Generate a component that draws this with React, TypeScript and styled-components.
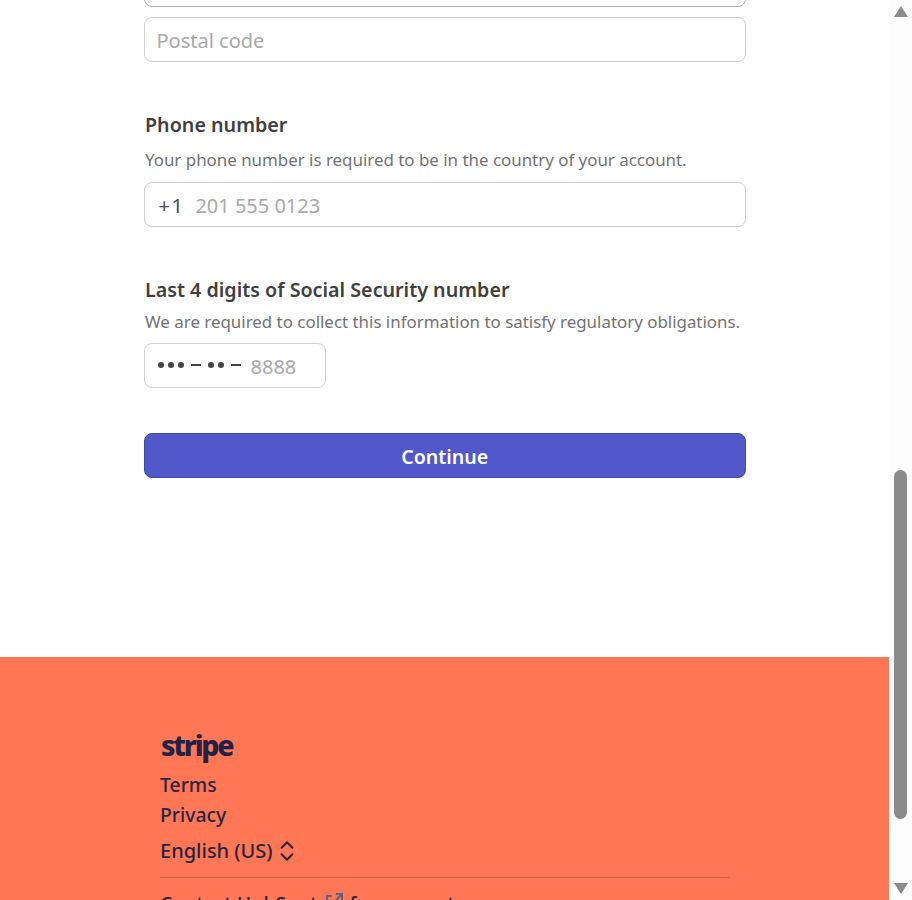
import React from 'react';
import styled, { createGlobalStyle } from 'styled-components';
import { ChevronsUpDown } from 'lucide-react';

const GlobalStyle = createGlobalStyle`
    html, body {
        margin: 0;
        padding: 0;
        height: 900px;
        overflow: hidden;
        background: #fff;
        font-family: "Noto Sans", "Open Sans", Arial, sans-serif;
    }
`;

const App: React.FC = () => {
    return (
        <Screen>
            <GlobalStyle />
            <Page>
                <Form>
                    <ClippedInput />
                    <TextInput>
                        <Placeholder>Postal code</Placeholder>
                    </TextInput>

                    <Section>
                        <Label>Phone number</Label>
                        <Help>Your phone number is required to be in the country of your account.</Help>
                        <TextInput>
                            <Prefix>+1</Prefix>
                            <Placeholder>201 555 0123</Placeholder>
                        </TextInput>
                    </Section>

                    <Section>
                        <Label>Last 4 digits of Social Security number</Label>
                        <Help $tight>We are required to collect this information to satisfy regulatory obligations.</Help>
                        <SsnInput>
                            <Mask>
                                <Dot />
                                <Dot />
                                <Dot />
                                <Dash />
                                <Dot />
                                <Dot />
                                <Dash />
                            </Mask>
                            <Placeholder>8888</Placeholder>
                        </SsnInput>
                    </Section>

                    <Continue type="button">Continue</Continue>
                </Form>

                <Footer>
                    <Logo>stripe</Logo>
                    <FooterLink>Terms</FooterLink>
                    <FooterLink>Privacy</FooterLink>
                    <Language>
                        English (US)
                        <ChevronsUpDown size={26} strokeWidth={1.9} />
                    </Language>
                    <Divider />
                    <Contact>
                        Contact HubSpot
                        <ExternalIcon viewBox="0 0 20 20" aria-hidden="true">
                            <path d="M8 4H3v13h13v-5" />
                            <path d="M10 10l8-8M12 2h6v6" />
                        </ExternalIcon>
                        for support
                    </Contact>
                </Footer>
            </Page>

            <ScrollTrack>
                <ArrowUp />
                <ThumbArea>
                    <Thumb />
                </ThumbArea>
                <ArrowDown />
            </ScrollTrack>
        </Screen>
    );
};

const Screen = styled.div`
    display: flex;
    width: 912px;
    height: 900px;
    overflow: hidden;
`;

const Page = styled.div`
    flex: 0 0 889px;
    display: flex;
    flex-direction: column;
    background: #fff;
`;

const Form = styled.div`
    flex: none;
    display: flex;
    flex-direction: column;
    width: 603px;
    height: 657px;
    margin-left: 143.5px;
`;

const TextInput = styled.div`
    flex: none;
    display: flex;
    align-items: center;
    box-sizing: border-box;
    width: 602.5px;
    height: 45px;
    padding: 2px 12px 0;
    background: #fff;
    border: 1.5px solid #d0d0d0;
    border-radius: 8px;
    font-size: 20px;
`;

const ClippedInput = styled(TextInput)`
    margin-top: -38px;
    margin-bottom: 10px;
    border-color: #b4b4b4;
`;

const SsnInput = styled(TextInput)`
    width: 182px;
`;

const Placeholder = styled.span`
    color: #a9a9a9;
`;

const Prefix = styled.span`
    margin: 0 11px 0 2px;
    letter-spacing: 1.5px;
    color: #4a4a4a;
`;

const Mask = styled.span`
    display: flex;
    align-items: center;
    gap: 4px;
    margin: 0 7px 3px 1px;
`;

const Dot = styled.i`
    width: 6px;
    height: 6px;
    border-radius: 50%;
    background: #444;
`;

const Dash = styled.i`
    width: 10px;
    height: 2px;
    margin: 0 3px;
    background: #444;
`;

const Section = styled.div`
    display: flex;
    flex-direction: column;
    margin-top: 48px;
`;

const Label = styled.div`
    margin-left: 1.5px;
    font-size: 19.7px;
    line-height: 30px;
    font-weight: 600;
    color: #404040;
`;

const Help = styled.div<{ $tight?: boolean }>`
    margin: ${(p) => (p.$tight ? '5px 0 9px' : '8px 0 10px')};
    margin-left: 1.5px;
    font-size: 16.9px;
    line-height: 24px;
    color: #737373;
    white-space: nowrap;
`;

const Continue = styled.button`
    flex: none;
    box-sizing: border-box;
    width: 602.5px;
    height: 45px;
    margin-top: 45px;
    padding: 2px 0 0;
    background: #5058ca;
    border: 1px solid #3f47ad;
    border-radius: 8px;
    color: #fff;
    font-family: inherit;
    font-size: 19.6px;
    font-weight: 600;
`;

const Footer = styled.div`
    flex: none;
    display: flex;
    flex-direction: column;
    align-items: flex-start;
    box-sizing: border-box;
    height: 243px;
    padding: 69px 159px 0 160px;
    overflow: hidden;
    background: #ff7755;
    color: #2a2440;
`;

const Logo = styled.div`
    margin-bottom: 6px;
    margin-left: 1px;
    font-size: 28.5px;
    line-height: 38px;
    font-weight: 800;
    letter-spacing: -2.2px;
    color: #232145;
`;

const FooterLink = styled.a`
    font-size: 19.4px;
    line-height: 30px;
    font-weight: 500;
`;

const Language = styled.div`
    display: flex;
    align-items: center;
    gap: 1px;
    margin-top: 6px;
    font-size: 20px;
    line-height: 30px;
    font-weight: 500;
`;

const Divider = styled.div`
    flex: none;
    align-self: stretch;
    height: 1px;
    margin-top: 11px;
    background: #cb6049;
`;

const Contact = styled.div`
    display: flex;
    align-items: center;
    gap: 7px;
    margin-top: 11px;
    font-size: 19.4px;
    line-height: 30px;
    font-weight: 500;
    white-space: nowrap;
`;

const ExternalIcon = styled.svg`
    width: 20px;
    height: 20px;
    margin: -4px -2px 0 0;
    fill: none;
    stroke: #5c6384;
    stroke-width: 2;
`;

const ScrollTrack = styled.div`
    flex: 1;
    display: flex;
    flex-direction: column;
    align-items: center;
    background: #fdfdfd;
`;

const ArrowUp = styled.div`
    flex: none;
    width: 0;
    height: 0;
    margin-top: 6px;
    border-left: 7px solid transparent;
    border-right: 7px solid transparent;
    border-bottom: 11px solid #8b8b8b;
`;

const ArrowDown = styled.div`
    flex: none;
    width: 0;
    height: 0;
    margin-bottom: 6px;
    border-left: 7px solid transparent;
    border-right: 7px solid transparent;
    border-top: 11px solid #8b8b8b;
`;

const ThumbArea = styled.div`
    flex: 1;
    display: flex;
    flex-direction: column;
    justify-content: flex-end;
    padding-bottom: 64px;
`;

const Thumb = styled.div`
    width: 13px;
    height: 349px;
    border-radius: 7px;
    background: #8b8b8b;
`;

export default App;
